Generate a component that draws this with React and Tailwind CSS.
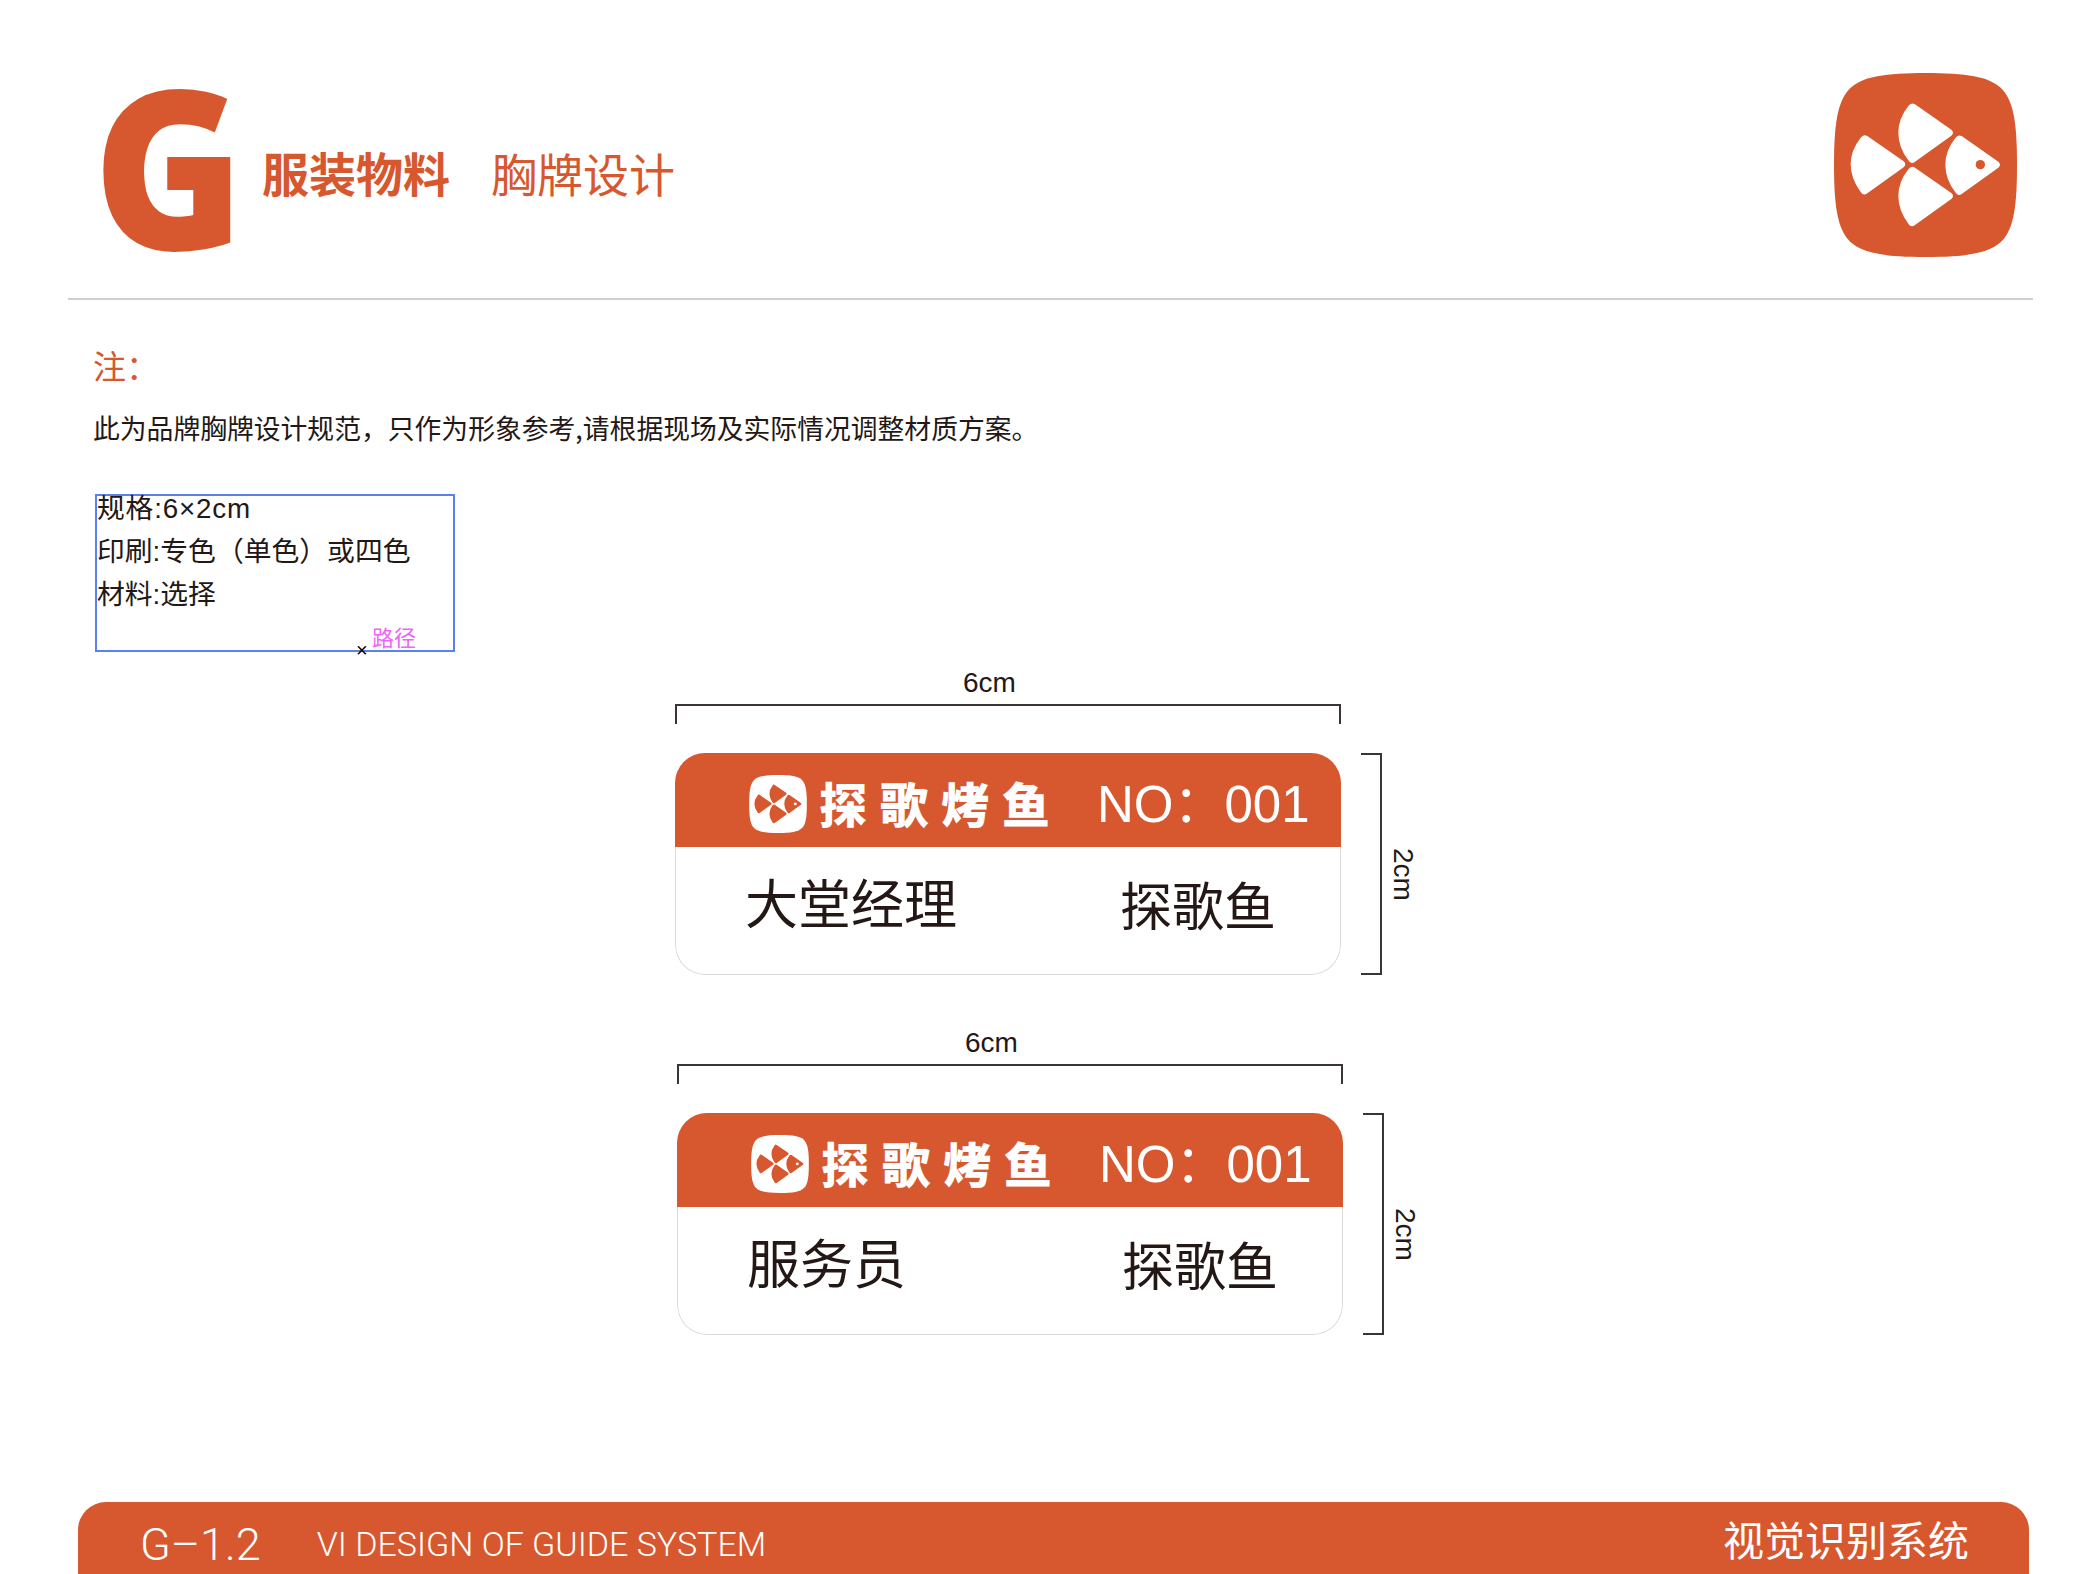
const Fin = ({ x, y, fill }) => (
  <path
    transform={`translate(${x} ${y})`}
    fill={fill}
    d="M183 262 Q191 250 203 257 L312 333 Q322 342 312 351 L203 429 Q191 438 183 425 Q153 385 153 342 Q153 300 183 262 Z"
  />
);

// fish mark, drawn in the coordinates of the large logo
const Logo = ({ className, bg, fg }) => (
  <svg viewBox="0 0 549 552" className={className}>
    <path
      fill={bg}
      d="M275 0 C395 0 465 10 503 47 C540 85 549 155 549 276 C549 397 540 467 503 505 C465 542 395 552 275 552 C155 552 85 542 47 505 C10 467 0 397 0 276 C0 155 10 85 47 47 C85 10 155 0 275 0 Z"
    />
    <g transform="translate(-103 -68)">
      <Fin x={0} y={0} fill={fg} />
      <Fin x={143} y={-95} fill={fg} />
      <Fin x={143} y={95} fill={fg} />
      <Fin x={284} y={1} fill={fg} />
      <circle cx="542" cy="343" r="14" fill={bg} />
    </g>
  </svg>
);

const Badge = ({ role }) => (
  <div className="w-[666px] h-[222px] rounded-[30px] bg-white overflow-hidden">
    <div className="h-[94px] pt-[8px] bg-[#d7582e] flex items-center text-white">
      <Logo className="ml-[74px] w-[58px] h-[58px] shrink-0" bg="#ffffff" fg="#d7582e" />
      <span className="ml-[12px] pb-[4px] w-[278px] text-[48px] leading-none font-black tracking-[13px] whitespace-nowrap font-['Noto_Sans_CJK_SC',sans-serif]">
        探歌烤鱼
      </span>
      <span className="text-[51px] leading-none whitespace-nowrap font-['Liberation_Sans','Noto_Sans_CJK_SC',sans-serif]">
        NO：001
      </span>
    </div>
    <div className="h-[128px] border-x border-b border-[#d9d9d9] rounded-b-[30px] flex text-[#231815] font-['Noto_Sans_CJK_SC',sans-serif]">
      <span className="ml-[69px] mt-[22px] w-[375px] text-[53px] leading-[64px] whitespace-nowrap">{role}</span>
      <span className="mt-[25px] text-[52px] leading-[64px] whitespace-nowrap">探歌鱼</span>
    </div>
  </div>
);

const BadgeSpec = ({ role, className }) => (
  <div className={className}>
    <div className="pl-[288px] h-[38px] text-[28px] leading-[34px] text-[#231815] font-['Liberation_Sans',sans-serif]">6cm</div>
    <div className="w-[666px] h-[20px] border-t-2 border-x-2 border-[#3a3533]" />
    <div className="mt-[29px] flex">
      <Badge role={role} />
      <div className="ml-[20px] w-[21px] h-[222px] border-y-2 border-r-2 border-[#3a3533]" />
      <div className="ml-[7px] pt-[95px] text-[28px] leading-[28px] text-[#231815] [writing-mode:vertical-rl] font-['Liberation_Sans',sans-serif]">
        2cm
      </div>
    </div>
  </div>
);

export default function App() {
  return (
    <div className="w-[2100px] h-[1574px] bg-white flex flex-col overflow-hidden font-['Noto_Sans_CJK_SC',sans-serif]">
      {/* Header */}
      <div className="h-[298px] flex shrink-0">
        <div className="ml-[93px] mt-[64px] w-[140px] h-[200px] text-[222px] leading-[200px] font-extrabold text-[#d7582e] scale-x-[0.92] origin-left font-['Open_Sans',sans-serif]">
          G
        </div>
        <div className="ml-[29px] mt-[142px] h-[60px] text-[46px] leading-[60px] text-[#d7582e] whitespace-nowrap">
          <span className="font-bold text-[47px]">服装物料</span>
          <span className="ml-[41px]">胸牌设计</span>
        </div>
        <Logo className="ml-auto mr-[83px] mt-[73px] w-[183px] h-[184px]" bg="#d7582e" fg="#ffffff" />
      </div>
      <div className="ml-[68px] w-[1965px] h-[2px] bg-[#cfcfcf] shrink-0" />

      {/* Notes */}
      <div className="ml-[93px] mt-[43px] h-[44px] text-[33px] leading-[44px] text-[#d7582e]">注：</div>
      <div className="ml-[93px] mt-[21px] h-[40px] text-[26.8px] leading-[40px] text-[#231815] whitespace-nowrap">
        此为品牌胸牌设计规范，只作为形象参考,请根据现场及实际情况调整材质方案。
      </div>
      <div className="relative ml-[95px] mt-[46px] w-[360px] h-[158px] border-2 border-[#5b80ef] text-[27.8px] leading-[43px] text-[#231815] shrink-0 font-['Liberation_Sans','Noto_Sans_CJK_SC',sans-serif]">
        <div className="-mt-[9px] tracking-[0.8px]">规格:6×2cm</div>
        <div>印刷:专色（单色）或四色</div>
        <div>材料:选择</div>
        <span className="absolute left-[275px] top-[129px] text-[22px] leading-[28px] text-[#ee66f5] whitespace-nowrap">路径</span>
        <span className="absolute left-[259px] top-[147px] text-[20px] leading-[14px] text-black">×</span>
      </div>

      {/* Badges */}
      <BadgeSpec role="大堂经理" className="ml-[675px] mt-[14px]" />
      <BadgeSpec role="服务员" className="ml-[677px] mt-[51px]" />

      {/* Footer */}
      <div className="mt-auto ml-[78px] w-[1951px] h-[72px] rounded-t-[28px] bg-[#d7582e] flex items-start text-white">
        <span className="ml-[62px] mt-[15px] text-[45px] leading-[56px] font-light font-['Roboto',sans-serif] whitespace-nowrap">G–1.2</span>
        <span className="ml-[56px] mt-[22px] text-[34px] leading-[40px] font-light font-['Roboto',sans-serif] whitespace-nowrap">VI DESIGN OF GUIDE SYSTEM</span>
        <span className="ml-auto mr-[60px] mt-[10px] text-[41px] leading-[52px] whitespace-nowrap">视觉识别系统</span>
      </div>
    </div>
  );
}
